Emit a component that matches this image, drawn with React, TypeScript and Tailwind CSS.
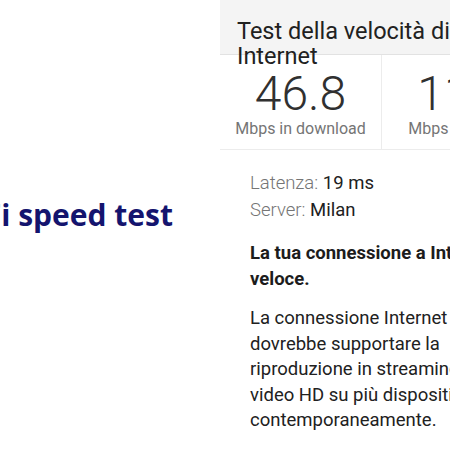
const stats = [
  { value: "46.8", label: "Mbps in download" },
  { value: "11.2", label: "Mbps in upload" },
];

export default function App() {
  return (
    <div className="flex h-[450px] w-[450px] overflow-hidden bg-white font-['Roboto',sans-serif]">
      <div className="flex w-[220px] shrink-0 items-start justify-end overflow-hidden pr-[47px] pt-[195px]">
        <span className="whitespace-nowrap font-['Open_Sans',sans-serif] text-[30px] font-bold leading-[40px] text-[#14146e]">
          Wi-Fi speed test
        </span>
      </div>
      <div className="w-[360px] shrink-0">
        <div className="h-[55px] border-b border-[#e2e2e2] bg-[#f4f4f4] pl-[17px] pt-[19px]">
          <h1 className="w-[240px] text-[23.5px] leading-[25px] text-[#212121]">
            Test della velocità di Internet
          </h1>
        </div>
        <div className="flex border-b border-[#ececec]">
          {stats.map((s, i) => (
            <div
              key={s.label}
              className={`flex w-[162px] flex-col items-center pb-[11px] pt-[14px] ${
                i === 0 ? "border-r border-[#ececec]" : ""
              }`}
            >
              <div className="text-[48px] font-light leading-[50px] text-[#303030]">{s.value}</div>
              <div className="mt-[1px] text-[16px] leading-[18px] text-[#757575]">{s.label}</div>
            </div>
          ))}
        </div>
        <div className="pl-[30px] pt-[20px] text-[18.5px] text-[#212121]">
          <p className="leading-[27px]">
            <span className="font-light text-[#757575]">Latenza:</span> 19 ms
          </p>
          <p className="leading-[27px]">
            <span className="font-light text-[#757575]">Server:</span> Milan
          </p>
          <p className="mt-[16px] w-[300px] font-bold leading-[26px] text-[#1c1c1c]">
            La tua connessione a Internet è veloce.
          </p>
          <p className="mt-[14px] w-[250px] leading-[25.5px]">
            La connessione Internet dovrebbe supportare la riproduzione in streaming di video HD su più dispositivi contemporaneamente.
          </p>
        </div>
      </div>
    </div>
  );
}
